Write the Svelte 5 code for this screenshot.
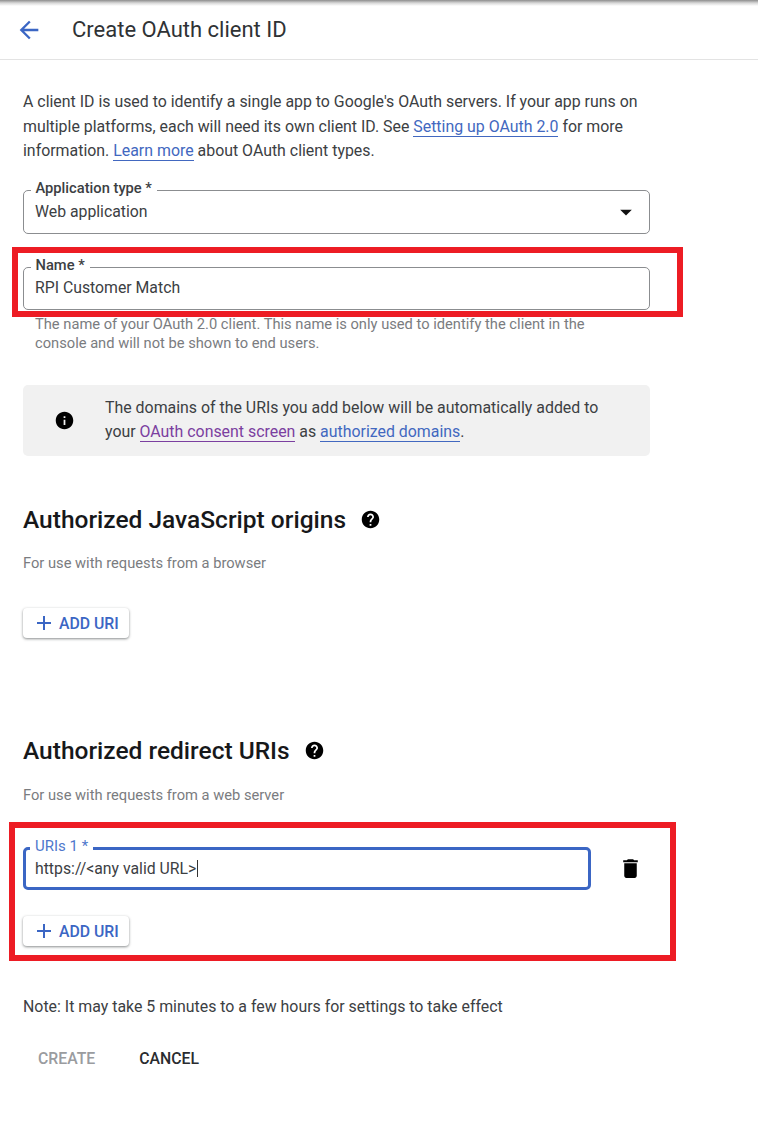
<script>
  const arrowBack = "M20 11H7.83l5.59-5.59L12 4l-8 8 8 8 1.41-1.41L7.83 13H20v-2z";
  const info = "M12 2C6.48 2 2 6.48 2 12s4.48 10 10 10 10-4.48 10-10S17.52 2 12 2zm1 15h-2v-6h2v6zm0-8h-2V7h2v2z";
  const help = "M12 2C6.48 2 2 6.48 2 12s4.48 10 10 10 10-4.48 10-10S17.52 2 12 2zm1 17h-2v-2h2v2zm2.07-7.75l-.9.92C13.45 12.9 13 13.5 13 15h-2v-.5c0-1.1.45-2.1 1.17-2.83l1.24-1.26c.37-.36.59-.86.59-1.41 0-1.1-.9-2-2-2s-2 .9-2 2H8c0-2.21 1.79-4 4-4s4 1.79 4 4c0 .88-.36 1.68-.93 2.25z";
  const trash = "M6 19c0 1.1.9 2 2 2h8c1.1 0 2-.9 2-2V7H6v12zM19 4h-3.5l-1-1h-5l-1 1H5v2h14V4z";
  const plus = "M19 13h-6v6h-2v-6H5v-2h6V5h2v6h6v2z";
  const caret = "M7 10l5 5 5-5z";
</script>

{#snippet icon(d, size, cls)}
  <svg class={cls} width={size} height={size} viewBox="0 0 24 24" aria-hidden="true"><path {d} /></svg>
{/snippet}

{#snippet addUri()}
  <button class="add" type="button">
    {@render icon(plus, 24, "plus")}
    <span>ADD URI</span>
  </button>
{/snippet}

<div class="page">
  <header>
    {@render icon(arrowBack, 28, "back")}
    <h1>Create OAuth client ID</h1>
  </header>

  <main>
    <p class="intro">
      A client ID is used to identify a single app to Google's OAuth servers. If your app runs on
      multiple platforms, each will need its own client ID. See <a href="#setup">Setting up OAuth 2.0</a> for more
      information. <a href="#learn">Learn more</a> about OAuth client types.
    </p>

    <div class="field select">
      <span class="label">Application type *</span>
      <span class="value">Web application</span>
      {@render icon(caret, 28, "caret")}
    </div>

    <div class="named">
      <div class="field name">
        <span class="label">Name *</span>
        <span class="value">RPI Customer Match</span>
        <div class="red name-red"></div>
      </div>
      <p class="helper">
        The name of your OAuth 2.0 client. This name is only used to identify the client in the
        console and will not be shown to end users.
      </p>
    </div>

    <div class="notice">
      <div class="notice-icon">{@render icon(info, 21, "solid")}</div>
      <p>
        The domains of the URIs you add below will be automatically added to
        your <a class="visited" href="#consent">OAuth consent screen</a> as <a href="#domains">authorized domains</a>.
      </p>
    </div>

    <section class="origins">
      <h2>Authorized JavaScript origins {@render icon(help, 21, "solid")}</h2>
      <p class="sub">For use with requests from a browser</p>
      {@render addUri()}
    </section>

    <section class="redirects">
      <h2>Authorized redirect URIs {@render icon(help, 21, "solid")}</h2>
      <p class="sub">For use with requests from a web server</p>
      <div class="uris">
        <div class="red uris-red"></div>
        <div class="uri-row">
          <div class="field focused">
            <span class="label">URIs 1 *</span>
            <span class="value">https://&lt;any valid URL&gt;<i class="cursor"></i></span>
          </div>
          {@render icon(trash, 25, "solid trash")}
        </div>
        {@render addUri()}
      </div>
    </section>

    <p class="note">Note: It may take 5 minutes to a few hours for settings to take effect</p>

    <div class="actions">
      <span class="create">CREATE</span>
      <span class="cancel">CANCEL</span>
    </div>
  </main>
</div>

<style>
  :global(body) {
    background: #fff;
  }

  .page {
    width: 758px;
    height: 1121px;
    overflow: hidden;
    font-family: Roboto, sans-serif;
    color: #3c4043;
    background: linear-gradient(#8d8d8d, #d8d8d8 3px, #fff 6px);
  }

  p {
    margin: 0;
  }

  header {
    height: 60px;
    box-sizing: border-box;
    display: flex;
    align-items: center;
    padding: 0 0 0 15px;
    border-bottom: 1px solid #e3e3e3;
  }

  .back {
    fill: #3b66c4;
  }

  h1 {
    margin: 0 0 0 29px;
    font-size: 22px;
    font-weight: 400;
    color: #2f3235;
  }

  main {
    padding: 30px 0 0 23px;
    width: 627px;
  }

  .intro {
    width: 627px;
    font-size: 15.9px;
    line-height: 24.5px;
  }

  a {
    color: #4268c0;
    text-decoration: none;
    border-bottom: 1px solid #4268c0;
  }

  a.visited {
    color: #7b3fa0;
    border-color: #7b3fa0;
  }

  .field {
    position: relative;
    height: 43px;
    box-sizing: border-box;
    display: flex;
    align-items: center;
    padding: 0 11px;
    border: 1px solid #8b8d90;
    border-radius: 5px;
    font-size: 15.8px;
  }

  .select {
    height: 44px;
    margin-top: 26px;
    justify-content: space-between;
  }

  .name {
    padding-bottom: 2px;
  }

  .label {
    position: absolute;
    top: -12px;
    left: 6.5px;
    padding: 0 5px;
    background: #fff;
    font-size: 14.7px;
    font-weight: 500;
    color: #3c4043;
  }

  .value {
    color: #3c4043;
  }

  .caret {
    margin-right: -2px;
    fill: #111;
  }

  .named {
    margin-top: 33px;
  }

  .red {
    position: absolute;
    border: 6px solid #ed1c24;
    pointer-events: none;
  }

  .name-red {
    top: -21px;
    bottom: -8px;
    left: -12px;
    right: -34px;
  }

  .helper {
    width: 570px;
    padding: 5px 0 0 12px;
    font-size: 14.7px;
    line-height: 19.5px;
    color: #7a7c80;
  }

  .notice {
    height: 71px;
    margin-top: 31px;
    display: flex;
    align-items: center;
    border-radius: 5px;
    background: #f1f1f1;
  }

  .notice-icon {
    flex: none;
    width: 82px;
    display: flex;
    justify-content: center;
  }

  .notice p {
    font-size: 15.9px;
    line-height: 24.5px;
    padding-right: 30px;
  }

  .solid {
    fill: #000;
  }

  h2 {
    margin: 0;
    display: flex;
    align-items: center;
    gap: 14px;
    font-size: 24.5px;
    line-height: 28px;
    font-weight: 500;
    color: #17181a;
  }

  .sub {
    margin-top: 19px;
    font-size: 14.7px;
    line-height: 20px;
    color: #7a7c80;
  }

  .origins {
    margin-top: 50px;
  }

  .add {
    height: 30px;
    width: 106px;
    margin-top: 35px;
    padding: 1px 0 0 9px;
    display: flex;
    align-items: center;
    gap: 3px;
    border: 0;
    border-radius: 4px;
    background: #fff;
    box-shadow: 0 1px 3px rgba(60, 64, 67, 0.45), 0 1px 2px rgba(60, 64, 67, 0.2);
    font-family: inherit;
    font-size: 15.8px;
    font-weight: 500;
    color: #3b66c4;
  }

  .plus {
    fill: #3b66c4;
  }

  .redirects {
    margin-top: 99px;
  }

  .redirects .sub {
    margin-top: 20px;
  }

  .uris {
    position: relative;
    margin-top: 42px;
  }

  .uris-red {
    top: -25px;
    bottom: -15px;
    left: -14px;
    right: -26px;
  }

  .uri-row {
    display: flex;
    align-items: center;
  }

  .focused {
    flex: none;
    width: 568px;
    height: 43px;
    border: 3px solid #3b66c4;
    padding: 0 9px;
  }

  .focused .label {
    top: -13px;
    left: 4px;
    color: #4f77cc;
    font-weight: 400;
    font-size: 15px;
  }

  .cursor {
    display: inline-block;
    width: 1px;
    height: 17px;
    margin-left: 1px;
    vertical-align: -3px;
    background: #333;
  }

  .trash {
    margin-left: 27px;
  }

  .uris .add {
    margin-top: 26px;
  }

  .note {
    margin-top: 51px;
    font-size: 15.9px;
    line-height: 20px;
    color: #3c4043;
  }

  .actions {
    margin-top: 32px;
    display: flex;
    gap: 44px;
    padding-left: 15px;
    font-size: 15.8px;
    font-weight: 500;
    line-height: 20px;
  }

  .create {
    color: #9a9c9f;
  }

  .cancel {
    color: #2a2c2f;
  }
</style>
